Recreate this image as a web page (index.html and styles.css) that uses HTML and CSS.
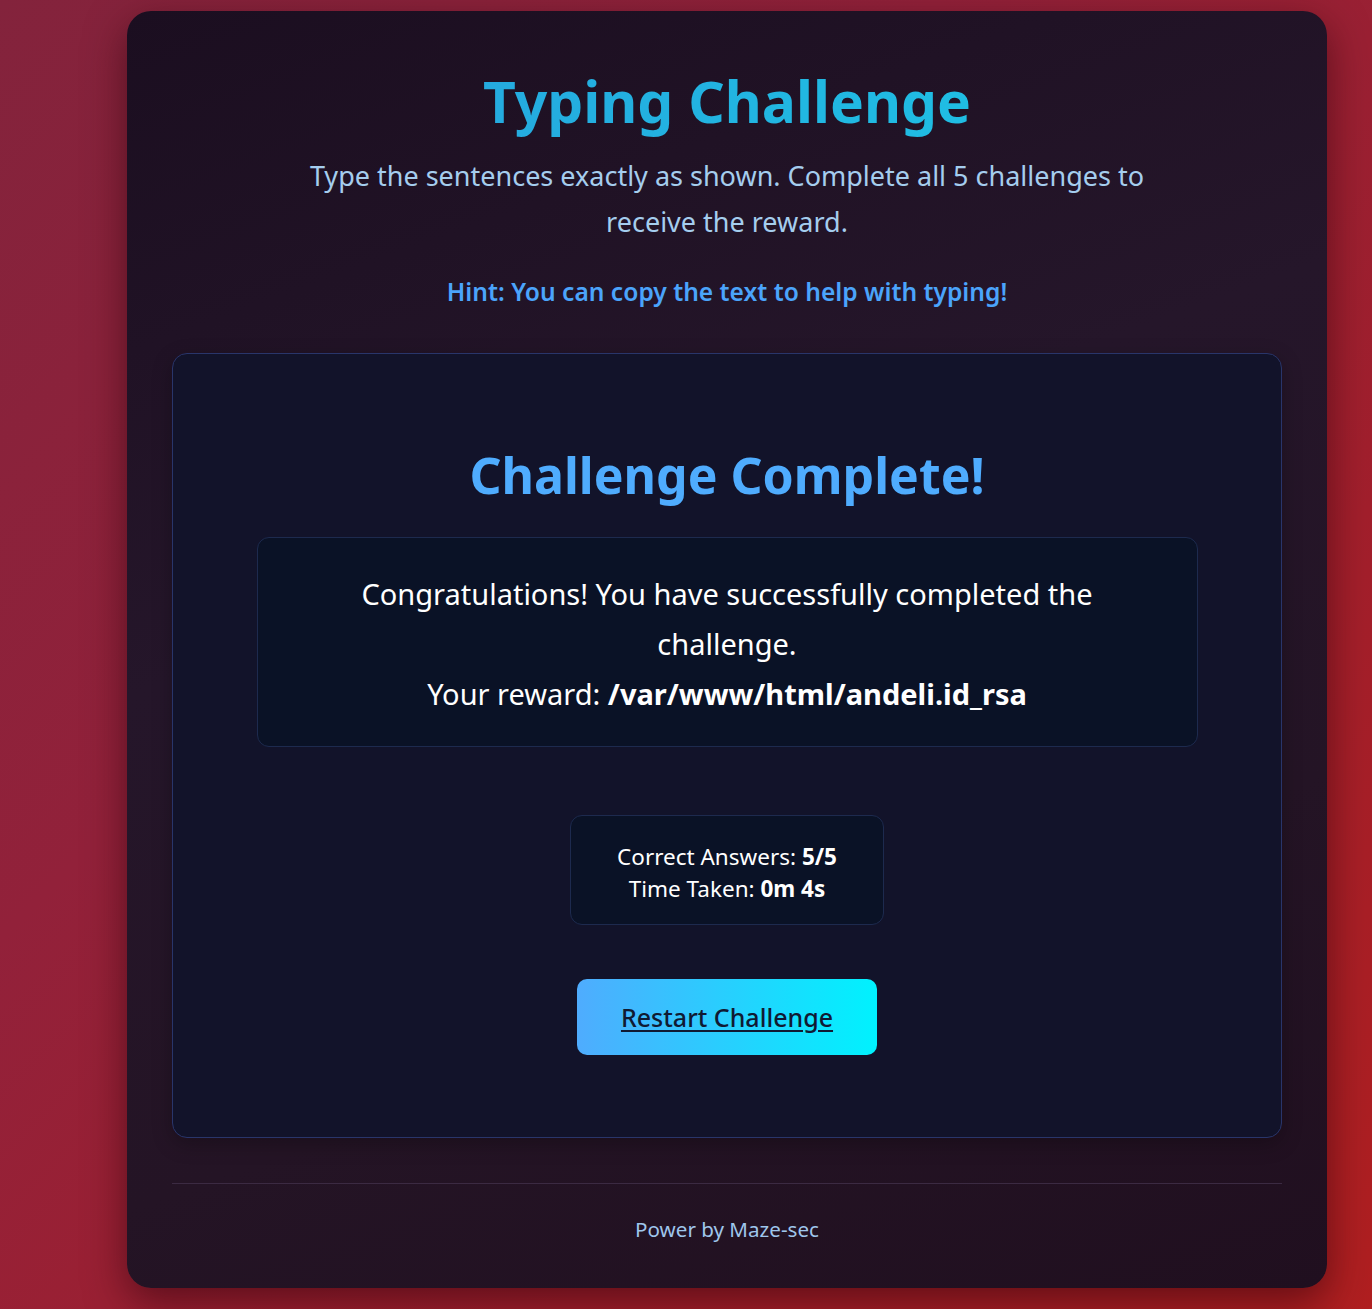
FILE: index.html
```html
<!DOCTYPE html>
<html lang="en">
<head>
<meta charset="utf-8">
<title>Typing Challenge</title>
<link rel="stylesheet" href="styles.css">
</head>
<body>
<div class="card">
  <h1 class="title">Typing Challenge</h1>
  <p class="subtitle">Type the sentences exactly as shown. Complete all 5 challenges to receive the reward.</p>
  <p class="hint">Hint: You can copy the text to help with typing!</p>
  <section class="challenge">
    <h2 class="complete">Challenge Complete!</h2>
    <div class="result">
      <p>Congratulations! You have successfully completed the challenge.<br>Your reward: <strong>/var/www/html/andeli.id_rsa</strong></p>
    </div>
    <div class="stats">
      <div>Correct Answers: <strong>5/5</strong></div>
      <div>Time Taken: <strong>0m 4s</strong></div>
    </div>
    <a class="restart" href="#">Restart Challenge</a>
  </section>
  <footer class="footer">Power by Maze-sec</footer>
</div>
</body>
</html>
```
FILE: styles.css
```css
* { box-sizing: border-box; }
html, body { margin: 0; padding: 0; }
body {
  min-height: 1309px;
  font-family: "Noto Sans", "Open Sans", sans-serif;
  background: linear-gradient(135deg, #83233c 0%, #92213a 35%, #a21f2c 70%, #b01f20 100%);
  padding: 11px 0 21px;
}
.card {
  width: 1200px;
  margin: 0 0 0 127px;
  height: 1277px;
  border-radius: 24px;
  padding: 54px 45px 0;
  background: linear-gradient(160deg, #1b0e20 0%, #25162a 40%, #241425 70%, #200f1f 100%);
  box-shadow: 0 14px 40px rgba(40, 0, 10, 0.55);
  text-align: center;
}
.title {
  margin: 0;
  font-size: 57px;
  line-height: 72px;
  font-weight: 700;
  background: linear-gradient(90deg, #289fdc, #1cc9e6);
  -webkit-background-clip: text;
  background-clip: text;
  color: transparent;
}
.subtitle {
  margin: 16px auto 0;
  max-width: 870px;
  font-size: 27px;
  line-height: 46px;
  color: #a5cdee;
}
.hint {
  margin: 31px 0 0;
  font-size: 24.6px;
  line-height: 32px;
  font-weight: 600;
  color: #4ba4fb;
}
.challenge {
  margin-top: 45px;
  height: 785px;
  border: 1px solid #29356a;
  border-radius: 15px;
  background: #12132a;
  padding: 91px 0 0;
  display: flex;
  flex-direction: column;
  align-items: center;
  box-shadow: 0 6px 20px rgba(0, 0, 0, 0.25);
}
.complete {
  margin: 0;
  font-size: 50px;
  line-height: 60px;
  font-weight: 700;
  color: #4facfe;
}
.result {
  margin-top: 32px;
  width: 941px;
  height: 210px;
  border: 1px solid #1d2a4e;
  border-radius: 12px;
  background: #0a1226;
  padding: 31px 0 0;
}
.result p {
  margin: 0 auto;
  max-width: 820px;
  font-size: 29px;
  line-height: 50px;
  color: #ffffff;
}
.result strong { font-weight: 700; }
.stats {
  margin-top: 68px;
  width: 314px;
  height: 110px;
  border: 1px solid #1d2a4e;
  border-radius: 12px;
  background: #0a1226;
  padding: 25px 0 19px;
  font-size: 22.5px;
  line-height: 32px;
  color: #ffffff;
}
.restart {
  margin-top: 54px;
  width: 300px;
  height: 76px;
  border-radius: 10px;
  background: linear-gradient(90deg, #4facfe, #00f2fe);
  color: #101a33;
  font-size: 25px;
  font-weight: 500;
  display: flex;
  align-items: center;
  justify-content: center;
  text-decoration: underline;
  text-underline-offset: 3px;
}
.footer {
  margin-top: 45px;
  border-top: 1px solid #3b2a42;
  padding-top: 31px;
  font-size: 20.6px;
  line-height: 28px;
  color: #9fc6ec;
}
```
